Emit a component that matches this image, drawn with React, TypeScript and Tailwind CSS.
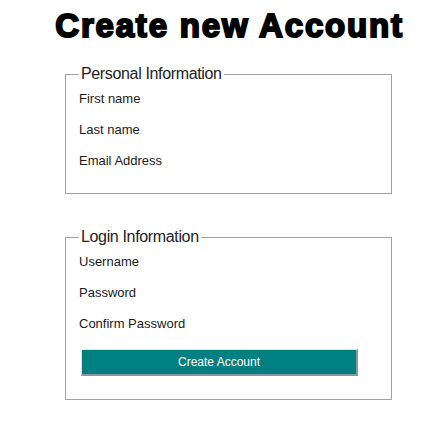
export default function App() {
  const personal = ["First name", "Last name", "Email Address"];
  const login = ["Username", "Password", "Confirm Password"];

  return (
    <div className="w-[447px] h-[434px] bg-white font-['Liberation_Sans',Arial,sans-serif] text-[#1a1a1a]">
      <div className="h-[65px] pt-[8px] pl-[12px]">
        <h1 className="text-center text-[33px] leading-[36px] font-bold tracking-[1.8px] text-black [-webkit-text-stroke:2px_black]">
          Create new Account
        </h1>
      </div>

      <fieldset className="ml-[65px] w-[327px] border border-[#a3a3a3] pl-[13px] pb-[17px]">
        <legend className="px-[2px] text-[16px] leading-[18px] tracking-[-0.35px] text-[#222]">
          Personal Information
        </legend>
        {personal.map((label) => (
          <div key={label} className="h-[31px] flex items-center text-[13px]">
            {label}
          </div>
        ))}
      </fieldset>

      <fieldset className="mt-[34px] ml-[65px] w-[327px] border border-[#a3a3a3] pl-[13px] pb-[23px]">
        <legend className="px-[2px] text-[16px] leading-[18px] tracking-[-0.35px] text-[#222]">
          Login Information
        </legend>
        {login.map((label) => (
          <div key={label} className="h-[31px] flex items-center text-[13px]">
            {label}
          </div>
        ))}
        <button
          type="button"
          className="mt-[10px] ml-[2px] w-[277px] h-[27px] bg-[#008080] text-white text-[12px] border-t border-l border-t-[#c8ecec] border-l-[#c8ecec] border-b-2 border-r-2 border-b-[#8c9898] border-r-[#8c9898]"
        >
          Create Account
        </button>
      </fieldset>
    </div>
  );
}
